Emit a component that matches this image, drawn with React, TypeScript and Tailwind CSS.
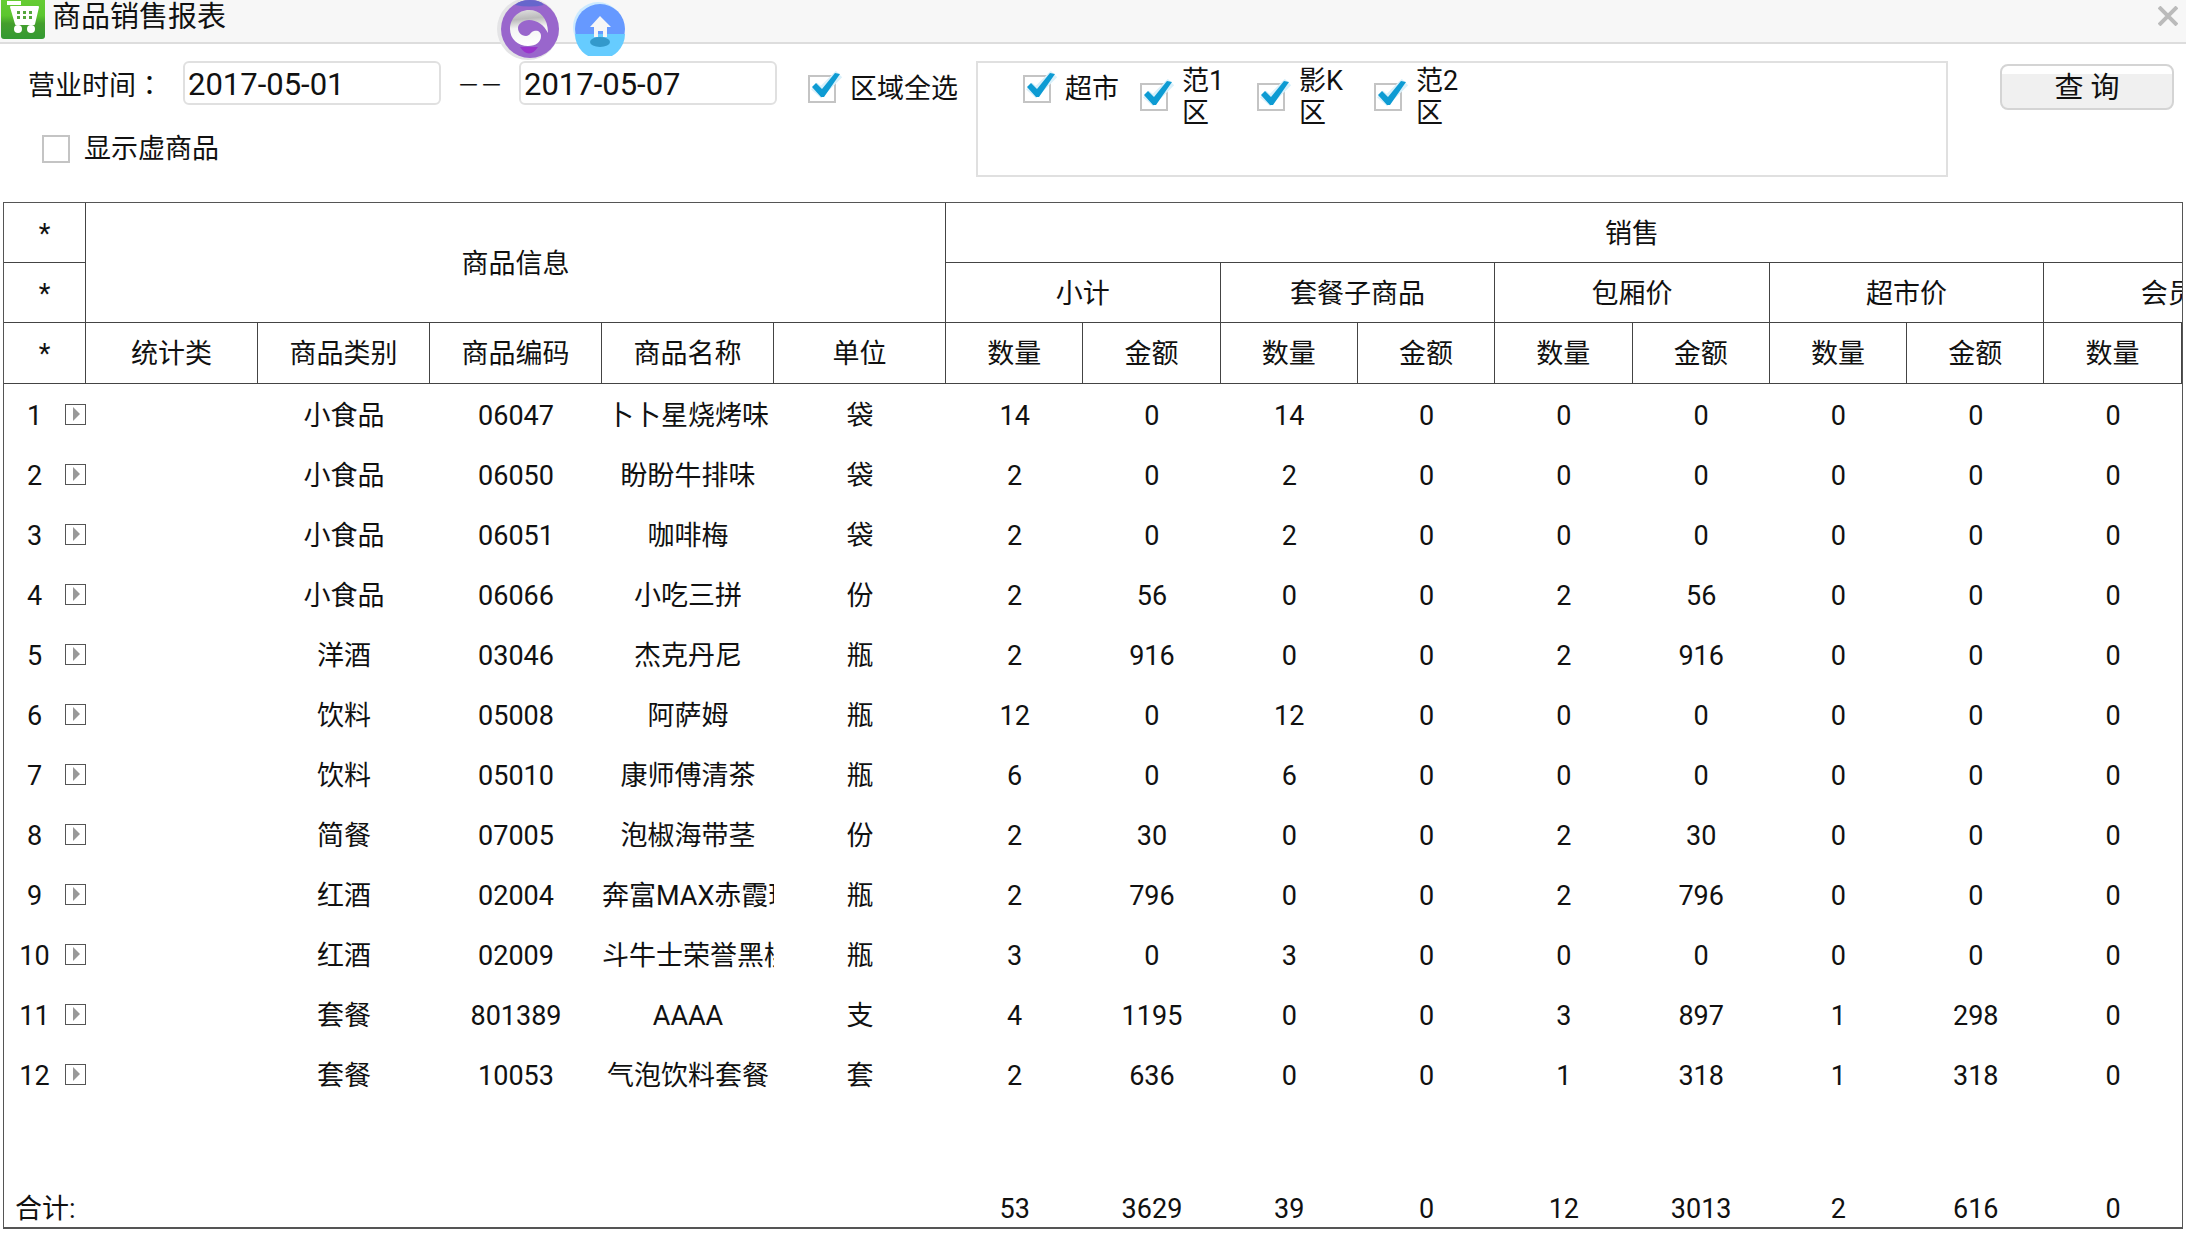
import { useState, type ReactNode } from "react";

type Cell = string | number;

interface Row {
  category: string;
  code: string;
  name: string;
  unit: string;
  sales: number[];
}

const rows: Row[] = [
  { category: "小食品", code: "06047", name: "卜卜星烧烤味", unit: "袋", sales: [14, 0, 14, 0, 0, 0, 0, 0, 0] },
  { category: "小食品", code: "06050", name: "盼盼牛排味", unit: "袋", sales: [2, 0, 2, 0, 0, 0, 0, 0, 0] },
  { category: "小食品", code: "06051", name: "咖啡梅", unit: "袋", sales: [2, 0, 2, 0, 0, 0, 0, 0, 0] },
  { category: "小食品", code: "06066", name: "小吃三拼", unit: "份", sales: [2, 56, 0, 0, 2, 56, 0, 0, 0] },
  { category: "洋酒", code: "03046", name: "杰克丹尼", unit: "瓶", sales: [2, 916, 0, 0, 2, 916, 0, 0, 0] },
  { category: "饮料", code: "05008", name: "阿萨姆", unit: "瓶", sales: [12, 0, 12, 0, 0, 0, 0, 0, 0] },
  { category: "饮料", code: "05010", name: "康师傅清茶", unit: "瓶", sales: [6, 0, 6, 0, 0, 0, 0, 0, 0] },
  { category: "简餐", code: "07005", name: "泡椒海带茎", unit: "份", sales: [2, 30, 0, 0, 2, 30, 0, 0, 0] },
  { category: "红酒", code: "02004", name: "奔富MAX赤霞珠", unit: "瓶", sales: [2, 796, 0, 0, 2, 796, 0, 0, 0] },
  { category: "红酒", code: "02009", name: "斗牛士荣誉黑桃", unit: "瓶", sales: [3, 0, 3, 0, 0, 0, 0, 0, 0] },
  { category: "套餐", code: "801389", name: "AAAA", unit: "支", sales: [4, 1195, 0, 0, 3, 897, 1, 298, 0] },
  { category: "套餐", code: "10053", name: "气泡饮料套餐", unit: "套", sales: [2, 636, 0, 0, 1, 318, 1, 318, 0] },
];

const infoColumns = ["统计类", "商品类别", "商品编码", "商品名称", "单位"];
const priceGroups = ["小计", "套餐子商品", "包厢价", "超市价", "会员价"];
const totals = [53, 3629, 39, 0, 12, 3013, 2, 616, 0];
const areas = ["超市", "范1区", "影K区", "范2区"];

function CartIcon() {
  return (
    <svg viewBox="0 0 46 40" className="h-10 w-[46px] shrink-0" aria-hidden="true">
      <defs>
        <linearGradient id="cart-bg" x1="0" y1="0" x2="0" y2="1">
          <stop offset="0" stopColor="#66cc33" />
          <stop offset="0.4" stopColor="#5cc62f" />
          <stop offset="0.6" stopColor="#449f2c" />
          <stop offset="1" stopColor="#339933" />
        </linearGradient>
      </defs>
      <path d="M1 0h44v36q0 3-3 3H4q-3 0-3-3z" fill="url(#cart-bg)" />
      <path d="M7 1h14v4H7z" fill="#fff" />
      <path d="M11 7h27l-4 17H16z" fill="#fff" stroke="#fff" strokeWidth="2" strokeLinejoin="round" />
      <g fill="#55a63c">
        <path d="M17 11h3v3h-3zM23 11h3v3h-3zM29 11h3v3h-3zM17 16h3v3h-3zM23 16h3v3h-3zM29 16h3v3h-3z" />
      </g>
      <circle cx="18" cy="29" r="4" fill="#fff" />
      <circle cx="31" cy="29" r="4" fill="#fff" />
    </svg>
  );
}

function SwirlIcon() {
  return (
    <svg viewBox="0 0 64 60" className="h-[60px] w-16" aria-hidden="true">
      <defs>
        <linearGradient id="swirl" x1="0.3" y1="0" x2="0.4" y2="1">
          <stop offset="0" stopColor="#ddd" />
          <stop offset="0.25" stopColor="#bbb" />
          <stop offset="0.5" stopColor="#f4f4f4" />
          <stop offset="1" stopColor="#fff" />
        </linearGradient>
      </defs>
      <circle cx="33" cy="29" r="31" fill="#e4e4e6" />
      <circle cx="35" cy="29" r="29" fill="#9966cc" />
      <path d="M20 5q5-5 15-5t14 5q-14 3-29 0z" fill="#6666cc" />
      <path d="M25 47h18q-9 13-18 0z" fill="#9933cc" />
      <path
        d="M53 33C53 18 45 10 34 10 23 10 15 19 15 29c0 10 8 17 18 17 8 0 13-4 13-10 0-4-3-6-7-5-4 1-4 5-8 5-5 0-8-4-8-8 0-4 5-8 11-8 8 0 15 5 19 13z"
        fill="url(#swirl)"
      />
    </svg>
  );
}

function HomeIcon() {
  return (
    <svg viewBox="0 0 52 56" className="h-14 w-[52px]" aria-hidden="true">
      <circle cx="25" cy="27" r="25" fill="#cceaff" />
      <circle cx="27" cy="29" r="25" fill="#6699ff" />
      <path d="M2 34h50a25 25 0 0 1-50 0z" fill="#66ccff" />
      <ellipse cx="27" cy="42" rx="10" ry="5" fill="#3399cc" />
      <path d="M27 16 38 27h-4v10h-4v-6h-5v6h-4V27h-4z" fill="#f6f6f6" />
    </svg>
  );
}

interface CheckProps {
  children: ReactNode;
  defaultChecked?: boolean;
  className?: string;
}

function Check({ children, defaultChecked = false, className = "" }: CheckProps) {
  const [checked, setChecked] = useState(defaultChecked);
  return (
    <label className={`flex items-center gap-3.5 leading-8 ${className}`}>
      <span className="relative block size-7 shrink-0">
        <input
          type="checkbox"
          checked={checked}
          onChange={(e) => setChecked(e.target.checked)}
          className="block size-7 appearance-none border-2 border-[#c4c4c4] bg-white"
        />
        {checked && (
          <svg viewBox="0 0 36 36" className="pointer-events-none absolute -top-1 left-0 size-9" aria-hidden="true">
            <path d="M6 15 13 21 31 3" fill="none" stroke="#d9f0fa" strokeWidth="9" />
            <path d="M4 16 8 12 14 18 27 2 32 3 16 26 13 26z" fill="#0d9bd3" />
          </svg>
        )}
      </span>
      <span>{children}</span>
    </label>
  );
}

function DateInput({ label, value }: { label: string; value: string }) {
  return (
    <input
      type="text"
      aria-label={label}
      defaultValue={value}
      className="h-11 w-[258px] rounded-md border-2 border-[#e0e0e0] bg-white px-[3px] pt-0.5 text-[31px]"
    />
  );
}

function BodyCell({ children }: { children?: Cell }) {
  return <td className="overflow-hidden p-0 pt-[3px] whitespace-nowrap">{children}</td>;
}

function ReportTable() {
  return (
    <div className="mx-[3px] overflow-hidden border border-b-2 border-[#555]">
      {/* one amount column more than fits, the last group runs off the edge */}
      <table className="w-[calc(100%+137px)] table-fixed border-separate border-spacing-0 text-center">
        <colgroup>
          <col className="w-[82px]" />
          {infoColumns.map((c) => (
            <col key={c} className="w-[172px]" />
          ))}
          {totals.map((_, i) => (
            <col key={i} />
          ))}
          <col />
        </colgroup>
        <thead className="[&_th]:border-r [&_th]:border-b [&_th]:border-[#444] [&_th]:p-0 [&_th]:pt-0.5 [&_th]:font-normal">
          <tr className="h-[60px]">
            <th>*</th>
            <th colSpan={5} rowSpan={2}>商品信息</th>
            <th colSpan={10}>销售</th>
          </tr>
          <tr className="h-[60px]">
            <th>*</th>
            {priceGroups.map((g) => (
              <th key={g} colSpan={2}>{g}</th>
            ))}
          </tr>
          <tr className="h-[61px]">
            <th>*</th>
            {infoColumns.map((c) => (
              <th key={c}>{c}</th>
            ))}
            {totals.map((_, i) => (
              <th key={i}>{i % 2 === 0 ? "数量" : "金额"}</th>
            ))}
            <th />
          </tr>
        </thead>
        <tbody>
          {rows.map((row, index) => (
            <tr key={row.code} className="h-[60px]">
              <td className="p-0">
                <div className="flex items-center">
                  <span className="flex-1 pt-[3px]">{index + 1}</span>
                  <button
                    type="button"
                    aria-label={`展开第${index + 1}行`}
                    className="flex size-[21px] items-center justify-center border border-[#555]"
                  >
                    <svg viewBox="0 0 8 14" className="h-3.5 w-2" aria-hidden="true">
                      <path d="M1 0 8 7 1 14z" fill="#999" />
                    </svg>
                  </button>
                </div>
              </td>
              <BodyCell />
              <BodyCell>{row.category}</BodyCell>
              <BodyCell>{row.code}</BodyCell>
              <BodyCell>{row.name}</BodyCell>
              <BodyCell>{row.unit}</BodyCell>
              {row.sales.map((n, i) => (
                <BodyCell key={i}>{n}</BodyCell>
              ))}
              <BodyCell />
            </tr>
          ))}
        </tbody>
        <tfoot>
          <tr className="h-[123px] align-bottom leading-9">
            <td colSpan={6} className="p-0 pl-[11px] text-left">合计:</td>
            {totals.map((n, i) => (
              <BodyCell key={i}>{n}</BodyCell>
            ))}
            <BodyCell />
          </tr>
        </tfoot>
      </table>
    </div>
  );
}

export default function App() {
  return (
    <div className="relative overflow-hidden bg-white font-[Roboto,'Noto_Sans_CJK_SC',sans-serif] text-[27px] leading-10 text-[#111]">
      <header className="flex h-11 items-start border-b-2 border-[#ddd] bg-[#f7f7f7]">
        <CartIcon />
        <h1 className="ml-1.5 flex-1 text-[29px] leading-[34px]">商品销售报表</h1>
        <button type="button" aria-label="关闭" className="mt-1.5 mr-2 p-0">
          <svg viewBox="0 0 20 20" className="size-5" aria-hidden="true">
            <path d="M1 1 19 19M19 1 1 19" stroke="#bbb" strokeWidth="4" />
          </svg>
        </button>
      </header>

      <div className="absolute top-0 left-[495px] flex items-start">
        <button type="button" aria-label="返回"><SwirlIcon /></button>
        <button type="button" aria-label="首页" className="ml-3.5"><HomeIcon /></button>
      </div>

      <form className="flex items-start pt-[17px] pr-3 pl-7" onSubmit={(e) => e.preventDefault()}>
        <div className="w-[780px]">
          <div className="flex h-11 items-center">
            <span className="w-[155px] pt-1">
              营业时间<span className="font-['Noto_Sans_CJK_TC',sans-serif]">：</span>
            </span>
            <DateInput label="开始日期" value="2017-05-01" />
            <span className="flex-1 text-center font-['Noto_Sans_CJK_SC',sans-serif] text-[23px]">－－</span>
            <DateInput label="结束日期" value="2017-05-07" />
            <span className="w-[31px]" />
          </div>
          <Check className="mt-6 ml-3.5 h-10">显示虚商品</Check>
        </div>
        <Check defaultChecked className="mt-[3px] h-[50px]">区域全选</Check>
        <fieldset className="ml-[18px] flex h-[116px] flex-1 items-start border-2 border-[#e0e0e0] pt-0.5 pl-[45px]">
          {areas.map((area) => (
            <Check key={area} defaultChecked className="min-h-12 w-[117px] pr-4">
              {area}
            </Check>
          ))}
        </fieldset>
        <button
          type="submit"
          className="mt-[3px] ml-[52px] h-[46px] w-[174px] rounded-lg border-2 border-[#d4d4d4] bg-linear-to-b from-white from-20% to-[#f0f0f0] to-20% pt-0.5 text-[29px]"
        >
          查 询
        </button>
      </form>

      <main className="mt-[25px] pb-1">
        <ReportTable />
      </main>
    </div>
  );
}
